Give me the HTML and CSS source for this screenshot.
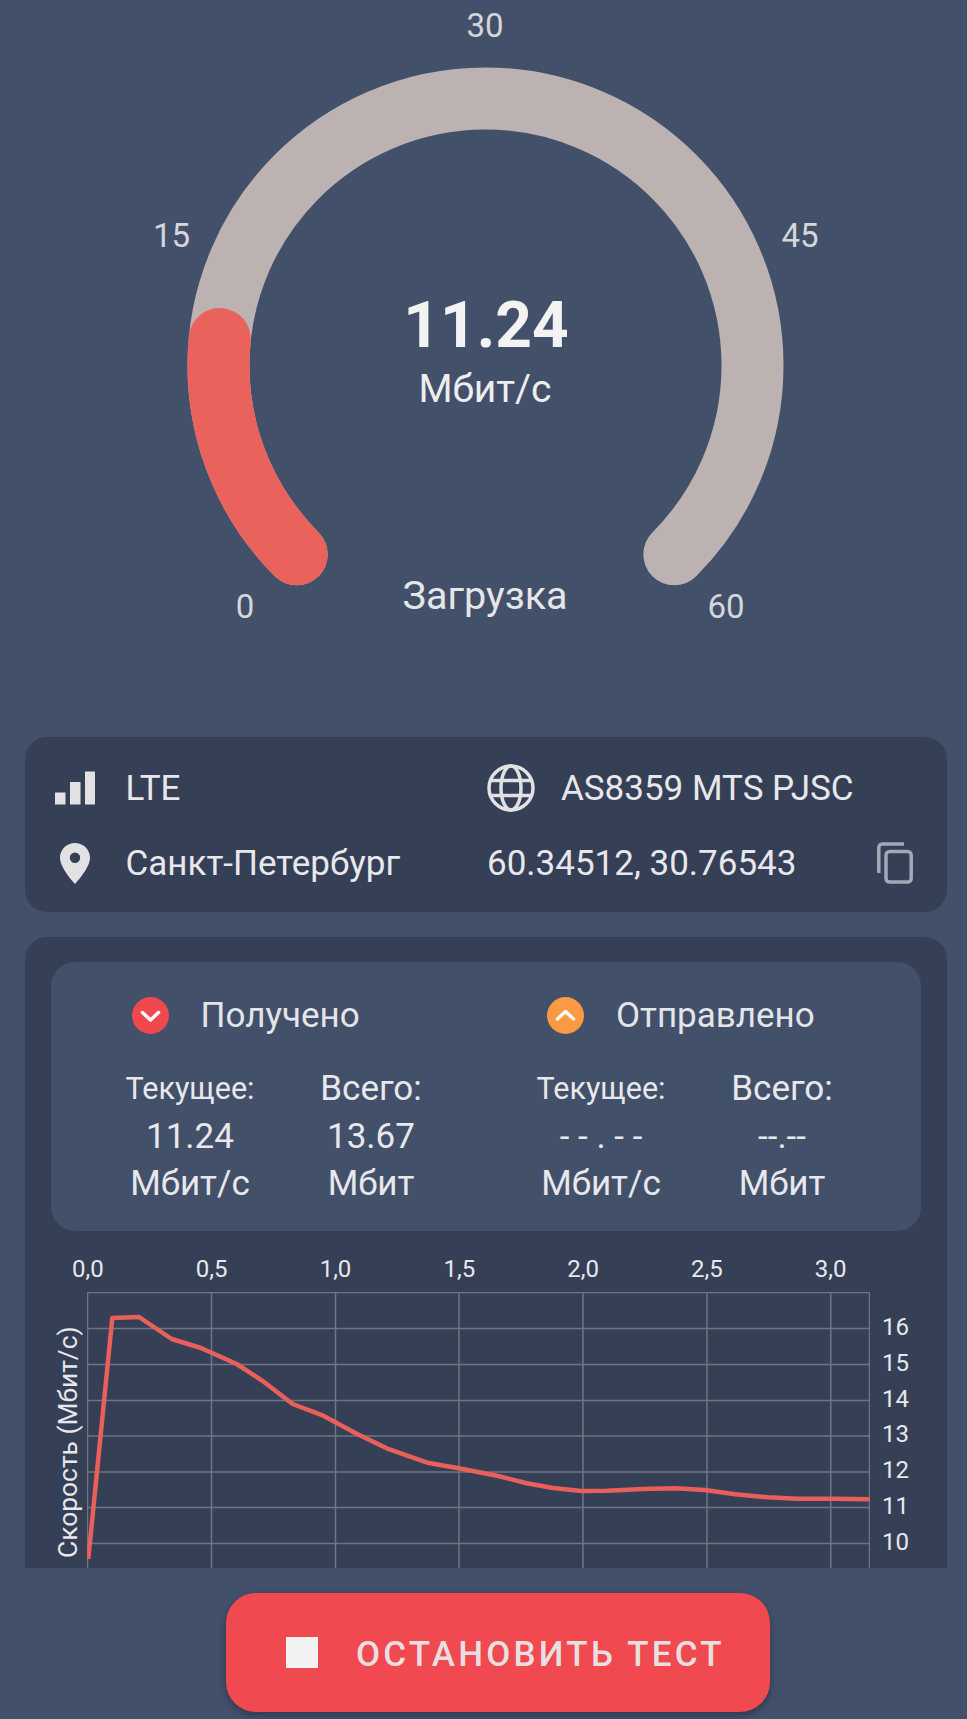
FILE: index.html
```html
<!DOCTYPE html>
<html lang="ru">
<head>
<meta charset="utf-8">
<title>Speed test</title>
<link rel="stylesheet" href="styles.css">
</head>
<body>
<main class="screen">
  <section class="gauge">
    <svg class="gauge-svg" width="967" height="737" viewBox="0 0 967 737">
      <path class="arc arc-track" d="M296.7 554.3 A267 267 0 1 1 674.3 554.3"/>
      <path class="arc arc-value" d="M296.7 554.3 A267 267 0 0 1 219.8 339"/>
    </svg>
    <span class="tick tick-30">30</span>
    <span class="tick tick-15">15</span>
    <span class="tick tick-45">45</span>
    <span class="tick tick-0">0</span>
    <span class="tick tick-60">60</span>
    <span class="gauge-value">11.24</span>
    <span class="gauge-unit">Мбит/с</span>
    <span class="gauge-mode">Загрузка</span>
  </section>

  <section class="panel info">
    <div class="info-cell">
      <span class="info-icon">
        <svg width="40" height="34" viewBox="0 0 40 34"><path class="ico-fill" d="M0 21.5h10.5V33.5H0zM15 11h10.500V33.500H15zM30 0.500h10V33.500H30z"/></svg>
      </span>
      <span class="info-text">LTE</span>
    </div>
    <div class="info-cell">
      <span class="info-icon info-icon-wide">
        <svg class="globe" width="48" height="48" viewBox="0 0 48 48">
          <circle cx="24" cy="24" r="22"/>
          <ellipse cx="24" cy="24" rx="10" ry="22"/>
          <path d="M4.500 16.500H43.500M4.500 31.500H43.500"/>
        </svg>
      </span>
      <span class="info-text">AS8359 MTS PJSC</span>
    </div>
    <div class="info-cell">
      <span class="info-icon">
        <svg class="pin" width="30" height="41" viewBox="0 0 30 41"><path class="ico-fill" fill-rule="evenodd" d="M15 0C6.700 0 0 6.600 0 14.800 0 25.500 15 41 15 41S30 25.500 30 14.800C30 6.600 23.300 0 15 0ZM15 9.500a5.200 5.200 0 1 1 0 10.400 5.200 5.200 0 0 1 0-10.400Z"/></svg>
      </span>
      <span class="info-text">Санкт-Петербург</span>
    </div>
    <div class="info-cell">
      <span class="info-text">60.34512, 30.76543</span>
      <svg class="copy" width="36" height="42" viewBox="0 0 36 42">
        <path d="M1.800 31V5.500a3.500 3.500 0 0 1 3.500-3.500H27"/>
        <rect x="9" y="9.500" width="25.200" height="30.500" rx="3.500"/>
      </svg>
    </div>
  </section>

  <section class="panel results">
    <div class="summary">
      <div class="group">
        <div class="group-head">
          <svg class="badge" width="37" height="37" viewBox="0 0 37 37"><circle class="badge-down" cx="18.500" cy="18.500" r="18.500"/><path class="chev" d="M10.500 15.500l8 7.500 8-7.500"/></svg>
          <span class="group-title">Получено</span>
        </div>
        <div class="stats">
          <div class="stat"><span class="stat-label">Текущее:</span><span>11.24</span><span>Мбит/с</span></div>
          <div class="stat"><span>Всего:</span><span>13.67</span><span>Мбит</span></div>
        </div>
      </div>
      <div class="group group-up">
        <div class="group-head">
          <svg class="badge" width="37" height="37" viewBox="0 0 37 37"><circle class="badge-up" cx="18.500" cy="18.500" r="18.500"/><path class="chev" d="M10.500 22l8-7.500 8 7.500"/></svg>
          <span class="group-title">Отправлено</span>
        </div>
        <div class="stats">
          <div class="stat"><span class="stat-label">Текущее:</span><span>- - . - -</span><span>Мбит/с</span></div>
          <div class="stat"><span>Всего:</span><span>--.--</span><span>Мбит</span></div>
        </div>
      </div>
    </div>

    <div class="chart">
      <div class="x-axis">
        <span>0,0</span><span>0,5</span><span>1,0</span><span>1,5</span><span>2,0</span><span>2,5</span><span>3,0</span>
      </div>
      <div class="chart-body">
        <div class="y-title"><span>Скорость (Мбит/с)</span></div>
        <svg class="plot" width="783" height="276" viewBox="0 0 783 276">
          <path class="grid-lines" d="M.5 .5H782.500M.5 36.500H782.500M.5 72.500H782.500M.5 108.500H782.500M.5 144H782.500M.5 180H782.500M.5 215.500H782.500M.5 251.500H782.500M.5 .5V276M124.500 .5V276M248.500 .5V276M372 .5V276M496 .5V276M620 .5V276M743.700 .5V276M782.500 .5V276"/>
          <path class="speed-line" d="M1.300 267L25.300 26L52 25L84.700 47L114 56L149.700 72L174.700 88.300L205.700 112L236.300 123.700L269.700 141.700L299.700 156.300L341 170.800L353 173L372 176.300L411 184L439.700 191.300L466 196L494.700 199L519.700 198.700L556 197L588 196.300L618 198L648 202.300L681 205.300L709.700 206.700L746 206.700L782.700 207.300"/>
        </svg>
        <div class="y-axis">
          <span>16</span><span>15</span><span>14</span><span>13</span><span>12</span><span>11</span><span>10</span>
        </div>
      </div>
    </div>
  </section>

  <div class="action">
    <button class="stop-btn" type="button"><span class="stop-icon"></span><span class="stop-label">ОСТАНОВИТЬ ТЕСТ</span></button>
  </div>
</main>
</body>
</html>
```

FILE: styles.css
```css
* { box-sizing: border-box; }

html, body {
  margin: 0;
  padding: 0;
}

body {
  background: #42506a;
  font-family: Roboto, "Noto Sans", sans-serif;
  color: #e9e9ec;
}

.screen {
  width: 967px;
  height: 1719px;
  overflow: hidden;
}

/* Gauge: a dial, marks sit on a free canvas */
.gauge {
  position: relative;
  height: 737px;
}

.gauge-svg { display: block; }

.arc {
  fill: none;
  stroke-width: 62;
  stroke-linecap: round;
}

.arc-track { stroke: #bcb2b2; }
.arc-value { stroke: #ea625c; }

.tick,
.gauge-value,
.gauge-unit,
.gauge-mode {
  position: absolute;
  transform: translate(-50%, -50%);
  white-space: nowrap;
  line-height: 1;
}

.tick {
  font-size: 33px;
  color: #d5d6da;
}

.tick-30 { left: 485px; top: 25px; }
.tick-15 { left: 171.500px; top: 235px; }
.tick-45 { left: 800px; top: 235px; }
.tick-0  { left: 245px; top: 606px; }
.tick-60 { left: 726px; top: 606px; }

.gauge-value {
  left: 486px;
  top: 326px;
  font-size: 64px;
  font-weight: 700;
  color: #f3f3f4;
}

.gauge-unit {
  left: 485px;
  top: 389px;
  font-size: 39px;
  color: #eeeef0;
}

.gauge-mode {
  left: 485px;
  top: 596px;
  font-size: 39.500px;
  color: #e6e6e9;
}

/* Panels */
.panel {
  margin-left: 25px;
  width: 922px;
  background: #353f56;
  border-radius: 22px;
}

.info {
  height: 175px;
  padding: 13.500px 0 13.500px 30px;
  display: grid;
  grid-template-columns: 432px 1fr;
  grid-auto-rows: 75px;
}

.info-cell {
  display: flex;
  align-items: center;
  font-size: 35px;
  padding-right: 34px;
}

.info-icon {
  width: 70.500px;
  flex: none;
  display: flex;
  align-items: center;
}

.info-icon-wide { width: 74px; }

.info-icon svg { display: block; }

.pin { margin-left: 5px; }

.ico-fill { fill: #e2e2e4; }

.globe circle,
.globe ellipse,
.globe path {
  fill: none;
  stroke: #e2e2e4;
  stroke-width: 3.500;
}

.info-text {
  white-space: nowrap;
  color: #e8e8ec;
}

.copy {
  margin-left: auto;
  fill: none;
  stroke: #a3a8b4;
  stroke-width: 3.500;
  display: block;
}

.results {
  margin-top: 25px;
  height: 631px;
  padding: 25px 26px 0 25.500px;
  border-radius: 22px 22px 0 0;
  overflow: hidden;
}

.summary {
  height: 269px;
  background: #42506a;
  border-radius: 24px;
  padding: 30px 0 0 49px;
  display: flex;
  gap: 49px;
}

.group { width: 362px; }

.group-head {
  height: 46px;
  display: flex;
  align-items: center;
  gap: 32px;
  padding-left: 32px;
}

.group-up .group-head { padding-left: 36.500px; }

.badge { display: block; flex: none; }
.badge-down { fill: #f0484f; }
.badge-up { fill: #fb9a43; }

.chev {
  fill: none;
  stroke: #f7f7f7;
  stroke-width: 3.500;
  stroke-linecap: round;
  stroke-linejoin: round;
}

.group-title {
  font-size: 35px;
  color: #e4e5e9;
  white-space: nowrap;
}

.stats {
  margin-top: 27px;
  display: grid;
  grid-template-columns: 181px 181px;
}

.stat {
  display: flex;
  flex-direction: column;
  align-items: center;
  font-size: 35px;
  line-height: 47.500px;
  color: #e8e8ec;
  white-space: nowrap;
}

.stat-label { font-size: 30.500px; }

.chart { margin-top: 20px; margin-left: -25.500px; }

.x-axis {
  display: grid;
  grid-template-columns: repeat(7, 123.800px);
  height: 36px;
  margin-bottom: 5px;
  padding-left: 1px;
  font-size: 24px;
  line-height: 36px;
  color: #e8e8ec;
  text-align: center;
}

.chart-body {
  display: flex;
  align-items: flex-start;
}

.y-title {
  width: 62px;
  height: 276px;
  flex: none;
  padding: 30px 0 10px 28px;
  font-size: 26.400px;
  color: #e8e8ec;
}

.y-title span {
  display: block;
  writing-mode: vertical-rl;
  transform: rotate(180deg);
  line-height: 30px;
  width: 30px;
  height: 100%;
  white-space: nowrap;
}

.plot { display: block; flex: none; }

.grid-lines {
  fill: none;
  stroke: #71757f;
  stroke-width: 1.500;
}

.speed-line {
  fill: none;
  stroke: #e9605b;
  stroke-width: 4.500;
  stroke-linejoin: round;
}

.y-axis {
  margin-left: 12px;
  padding-top: 18px;
  display: flex;
  flex-direction: column;
  font-size: 24px;
  line-height: 35.800px;
  color: #e8e8ec;
}

/* Action button */
.action {
  padding: 25px 0 0 226px;
}

.stop-btn {
  width: 544px;
  height: 119px;
  border: 0;
  border-radius: 30px;
  background: #f0494f;
  box-shadow: 0 3px 7px rgba(0, 0, 0, 0.3);
  display: flex;
  align-items: center;
  padding: 0 0 0 60px;
  font-family: inherit;
}

.stop-icon {
  width: 32px;
  height: 31px;
  background: #f2f2f2;
  flex: none;
}

.stop-label {
  margin-left: 38px;
  padding-top: 3px;
  font-size: 35px;
  font-weight: 500;
  letter-spacing: 3.200px;
  color: #e9dfe0;
  white-space: nowrap;
}
```
